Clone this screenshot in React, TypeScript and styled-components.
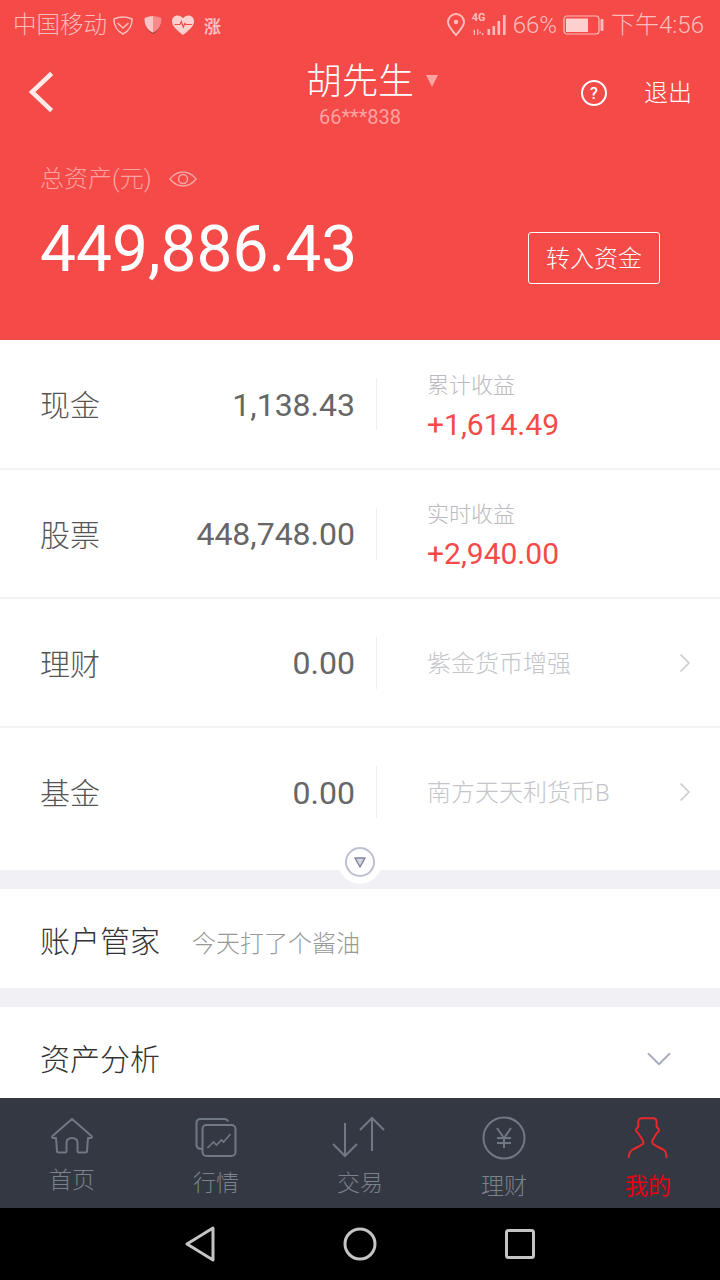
import React, { FC, ReactNode } from "react";
import styled, { createGlobalStyle } from "styled-components";
import { ChevronRight, ChevronDown } from "lucide-react";

const RED = "#f44a48";

const GlobalStyle = createGlobalStyle`
  html, body {
    margin: 0;
    padding: 0;
    background: #fff;
  }
  body {
    font-family: Roboto, "Noto Sans CJK SC", sans-serif;
  }
  * {
    box-sizing: border-box;
  }
`;

interface IAssetRow {
  label: string;
  amount: string;
  note: string;
  profit?: string;
}

const ASSET_ROWS: IAssetRow[] = [
  { label: "现金", amount: "1,138.43", note: "累计收益", profit: "+1,614.49" },
  { label: "股票", amount: "448,748.00", note: "实时收益", profit: "+2,940.00" },
  { label: "理财", amount: "0.00", note: "紫金货币增强" },
  { label: "基金", amount: "0.00", note: "南方天天利货币B" }
];

const StatusIcons: FC = () => (
  <>
    <StatusGlyph $gap={6}>
      <svg width="20" height="19" viewBox="0 0 20 19" fill="none" stroke="#fbbcbc" strokeWidth="1.6">
        <path d="M10 1c3.500 0 6.500.8 9 2 .3 6-3 12-9 15C4 15 .7 9 1 3c2.500-1.200 5.500-2 9-2z" />
        <path d="M4.500 7 10 12l5.500-5" />
      </svg>
    </StatusGlyph>
    <StatusGlyph $gap={11}>
      <svg width="18" height="20" viewBox="0 0 18 20">
        <path d="M9 1c3 0 6 .8 8.500 2 .3 7-2.500 13-8.500 16C3 16 .2 10 .5 3 3 1.800 6 1 9 1z" fill="#a83a3a" />
        <path d="M9 1C6 1 3 1.800.5 3 .2 9.500 2.800 15 9 17.800V1z" fill="#fbc4c4" />
        <path d="M9 1c3 0 6 .8 8.500 2 .2 6.500-2.300 12-8.500 14.800V1z" fill="#f98a8a" />
      </svg>
    </StatusGlyph>
    <StatusGlyph $gap={10}>
      <svg width="22" height="20" viewBox="0 0 22 20">
        <path
          d="M11 20C5.500 15.500 0 11.500 0 6.200 0 2.800 2.400.4 5.500.4c2.300 0 4.200 1.100 5.500 2.900C12.300 1.500 14.200.4 16.500.4 19.600.4 22 2.800 22 6.200 22 11.500 16.500 15.500 11 20z"
          fill="#fdd0d0"
        />
        <path d="M2.500 9.500h5.500l1.300-3 2 5.500 1.500-3.500 1 1h6" fill="none" stroke={RED} strokeWidth="1.200" />
      </svg>
    </StatusGlyph>
    <RiseMark>涨</RiseMark>
  </>
);

const Signal: FC = () => (
  <SignalBox>
    <NetworkMark>4G</NetworkMark>
    <svg width="36" height="22" viewBox="0 0 36 22" fill="#fbbcbc">
      <path d="M1 17l2-1.500V21H1.800v-3.200zM5 15h1.300v6H5zM7.500 17.500h1.300v2H7.500zM10 19h1.300v2H10z" />
      <rect x="15.500" y="15" width="2.600" height="6" />
      <rect x="20.500" y="12" width="2.600" height="9" />
      <rect x="25.500" y="7" width="2.600" height="14" />
      <rect x="31" y="1" width="2.600" height="20" />
    </svg>
  </SignalBox>
);

const StatusBar: FC = () => (
  <StatusRow>
    <StatusGroup>
      <CarrierText>中国移动</CarrierText>
      <StatusIcons />
    </StatusGroup>
    <StatusGroup>
      <svg width="20" height="24" viewBox="0 0 20 24" fill="none" stroke="#fbbcbc" strokeWidth="2">
        <path d="M10 22c-4-5-8-8.500-8-13a8 8 0 0 1 16 0c0 4.500-4 8-8 13z" />
        <circle cx="10" cy="9" r="2.200" fill="#fbbcbc" stroke="none" />
      </svg>
      <Signal />
      <StatusText>66%</StatusText>
      <BatterySlot>
        <svg width="41" height="20" viewBox="0 0 41 20">
          <rect x="1" y="1" width="35" height="18" rx="3" fill="none" stroke="#fbbcbc" strokeWidth="1.200" />
          <rect x="3" y="3.500" width="22" height="13.500" fill="#fdd0d0" />
          <rect x="37.500" y="4" width="3" height="12" rx="1" fill="#fbbcbc" />
        </svg>
      </BatterySlot>
      <ClockText>下午4:56</ClockText>
    </StatusGroup>
  </StatusRow>
);

const NavBar: FC = () => (
  <TitleBar>
    <BackButton>
      <svg width="28" height="42" viewBox="0 0 28 42" fill="none" stroke="#ffe9e9" strokeWidth="4.500" strokeLinecap="square">
        <path d="M22 4 4 21l18 17" strokeLinejoin="miter" />
      </svg>
    </BackButton>
    <TitleBlock>
      <TitleName>
        胡先生
        <TitleCaret />
      </TitleName>
      <AccountNo>66***838</AccountNo>
    </TitleBlock>
    <TitleActions>
      <HelpIcon>?</HelpIcon>
      <Logout>退出</Logout>
    </TitleActions>
  </TitleBar>
);

const Summary: FC = () => (
  <SummaryBlock>
    <SummaryLabel>
      总资产(元)
      <svg width="28" height="18" viewBox="0 0 28 18" fill="none" stroke="#fda3a3" strokeWidth="1.500">
        <path d="M1 9c3.500-4.500 8-7 13-7s9.500 2.500 13 7c-3.500 4.500-8 7-13 7S4.500 13.500 1 9z" />
        <circle cx="14" cy="9" r="4.500" />
      </svg>
    </SummaryLabel>
    <SummaryLine>
      <TotalAmount>449,886.43</TotalAmount>
      <TransferButton>转入资金</TransferButton>
    </SummaryLine>
  </SummaryBlock>
);

const AssetList: FC = () => (
  <Assets>
    {ASSET_ROWS.map((row, i) => (
      <AssetItem key={row.label} $height={i === 0 ? 130 : i === ASSET_ROWS.length - 1 ? 142 : 129} $last={i === ASSET_ROWS.length - 1}>
        <AssetLabel>{row.label}</AssetLabel>
        <AssetAmount>{row.amount}</AssetAmount>
        <AssetSide>
          {row.profit ? (
            <SideStack>
              <SideNote>{row.note}</SideNote>
              <SideProfit>{row.profit}</SideProfit>
            </SideStack>
          ) : (
            <SideLink>
              <SideLinkText>{row.note}</SideLinkText>
              <ChevronRight size={32} color="#c9cbd2" strokeWidth={1.3} />
            </SideLink>
          )}
        </AssetSide>
      </AssetItem>
    ))}
    <ExpandTab>
      <ExpandRing>
        <svg width="14" height="14" viewBox="0 0 14 14">
          <path d="M2 3h10L7 12z" fill="#d6d8e0" stroke="#7f84a0" strokeWidth="1.500" strokeLinejoin="round" />
        </svg>
      </ExpandRing>
    </ExpandTab>
  </Assets>
);

interface ITabProps {
  label: string;
  drop: number;
  active?: boolean;
  children: ReactNode;
}

const Tab: FC<ITabProps> = ({ label, drop, active, children }) => (
  <TabItem>
    <TabIcon>{children}</TabIcon>
    <TabLabel $drop={drop} $active={active}>
      {label}
    </TabLabel>
  </TabItem>
);

const BottomTabs: FC = () => (
  <TabBar>
    <Tab label="首页" drop={0}>
      <svg width="44" height="40" viewBox="0 0 44 40" fill="none" stroke="#6f7883" strokeWidth="2" strokeLinejoin="round">
        <path d="M22 3 2.500 20c-.8 1-.3 2 .8 2H6l1 13c0 1 1 1.500 2 1.500h6c1 0 1.500-.7 1.500-1.500v-8c0-3 2-5 5.500-5s5.500 2 5.500 5v8c0 .8.500 1.500 1.500 1.500h6c1 0 2-.5 2-1.500l1-13h2.700c1.100 0 1.600-1 .8-2z" />
      </svg>
    </Tab>
    <Tab label="行情" drop={3}>
      <svg width="44" height="42" viewBox="0 0 44 42" fill="none" stroke="#6f7883" strokeWidth="2">
        <path d="M8 33c-4 0-5.500-2-5.500-4V7c0-3 1.500-4 4-4h24c2 0 3 1 3.500 2.500" />
        <rect x="8.500" y="9" width="33" height="31" rx="4" />
        <path d="m13.500 32 6-6 3 3 5-5 2 2 7-8" strokeWidth="1.600" />
      </svg>
    </Tab>
    <Tab label="交易" drop={3}>
      <svg width="56" height="42" viewBox="0 0 56 42" fill="none" stroke="#6f7883" strokeWidth="2">
        <path d="M13 7v33M1 28l12 12 12-12" />
        <path d="M40 35V2M28 14 40 2l12 12" />
      </svg>
    </Tab>
    <Tab label="理财" drop={6}>
      <svg width="44" height="44" viewBox="0 0 44 44" fill="none" stroke="#6f7883" strokeWidth="2">
        <circle cx="22" cy="22" r="20.500" />
        <path d="m15 12 7 10 7-10M15 22h14M15 27h14M22 22v10" />
      </svg>
    </Tab>
    <Tab label="我的" drop={6} active>
      <svg width="40" height="44" viewBox="0 -1 40 44" fill="none" stroke="#e8282a" strokeWidth="2">
        <path d="M.5 41C1 37 2 34.500 4 33 8 30.500 13 29 15.300 26.300 15.500 25 15 24 14.600 23L10.300 16.300C9.500 15.500 8 15 8 13 8 11.500 9.500 11 10.300 9.600V5C10.300 3 11.500 1.300 13.600 1.300H25.300C27.500 1.300 28.600 3 28.600 5V9.600C29.500 11 31 11.500 31 13 31 15 29.500 15.500 28.600 16.300L24.600 23C24.200 24 23.900 25 24.600 26.300 27 29 32 30.500 36 33 38 34.500 38.500 37 38.600 41" />
      </svg>
    </Tab>
  </TabBar>
);

const SystemNav: FC = () => (
  <SystemBar>
    <svg width="30" height="36" viewBox="0 0 30 36" fill="none" stroke="#c4c4c4" strokeWidth="3" strokeLinejoin="round">
      <path d="M28 2v32L2 18z" />
    </svg>
    <svg width="34" height="34" viewBox="0 0 34 34" fill="none" stroke="#c4c4c4" strokeWidth="3">
      <circle cx="17" cy="17" r="15" />
    </svg>
    <svg width="30" height="30" viewBox="0 0 30 30" fill="none" stroke="#c4c4c4" strokeWidth="3" strokeLinejoin="round">
      <rect x="1.500" y="1.500" width="27" height="27" rx="2" />
    </svg>
  </SystemBar>
);

const App: FC = () => (
  <Root>
    <GlobalStyle />
    <RedHeader>
      <StatusBar />
      <NavBar />
      <Summary />
    </RedHeader>
    <Content>
      <AssetList />
      <Divider />
      <ButlerCard>
        <CardTitle>账户管家</CardTitle>
        <ButlerNote>今天打了个酱油</ButlerNote>
      </ButlerCard>
      <Divider />
      <AnalysisCard>
        <CardTitle>资产分析</CardTitle>
        <AnalysisChevron size={42} color="#a9adc0" strokeWidth={1.1} />
      </AnalysisCard>
    </Content>
    <BottomTabs />
    <SystemNav />
  </Root>
);

export default App;

const Root = styled.div`
  display: flex;
  flex-direction: column;
  width: 720px;
  height: 1280px;
  overflow: hidden;
  background: #fff;
`;

const RedHeader = styled.header`
  display: flex;
  flex-direction: column;
  height: 340px;
  background: ${RED};
  flex: none;
`;

const StatusRow = styled.div`
  display: flex;
  align-items: center;
  justify-content: space-between;
  height: 50px;
  padding: 0 16px 0 13px;
`;

const StatusGroup = styled.div`
  display: flex;
  align-items: center;
`;

const StatusGlyph = styled.span<{ $gap: number }>`
  display: flex;
  margin-left: ${({ $gap }) => $gap}px;
`;

const StatusText = styled.span`
  font-size: 24px;
  line-height: 50px;
  color: #fbbcbc;
  font-weight: 300;
`;

const CarrierText = styled(StatusText)`
  font-size: 23.5px;
`;

const ClockText = styled(StatusText)`
  margin-left: 7px;
`;

const SignalBox = styled.span`
  position: relative;
  display: flex;
  margin: 0 5px 0 6px;
`;

const NetworkMark = styled.span`
  position: absolute;
  left: 0;
  top: -2px;
  font-size: 11px;
  line-height: 12px;
  font-weight: 700;
  color: #fbbcbc;
`;

const BatterySlot = styled.span`
  display: flex;
  margin-left: 6px;
`;

const RiseMark = styled.span`
  margin-left: 10px;
  font-size: 17px;
  font-weight: 700;
  color: #fbbcbc;
`;

const TitleBar = styled.div`
  display: grid;
  grid-template-columns: 1fr auto 1fr;
  align-items: start;
  height: 88px;
  padding: 0 28px;
`;

const BackButton = styled.div`
  display: flex;
  padding-top: 21px;
`;

const TitleBlock = styled.div`
  display: flex;
  flex-direction: column;
  align-items: center;
  padding-top: 10px;
`;

const TitleName = styled.div`
  position: relative;
  font-size: 36px;
  line-height: 44px;
  color: #fff;
  font-weight: 300;
`;

const TitleCaret = styled.span`
  position: absolute;
  left: 120px;
  top: 15px;
  border-left: 6px solid transparent;
  border-right: 6px solid transparent;
  border-top: 12px solid #fda3a3;
`;

const AccountNo = styled.div`
  margin-top: 1px;
  font-size: 20px;
  line-height: 24px;
  color: #fda3a3;
`;

const TitleActions = styled.div`
  display: flex;
  align-items: center;
  justify-content: flex-end;
  gap: 37px;
  padding-top: 27px;
`;

const HelpIcon = styled.span`
  display: flex;
  align-items: center;
  justify-content: center;
  width: 26px;
  height: 26px;
  border: 2px solid #fff;
  border-radius: 50%;
  font-size: 16px;
  font-weight: 500;
  color: #fff;
`;

const Logout = styled.span`
  font-size: 24px;
  line-height: 32px;
  font-weight: 300;
  color: #fff;
`;

const SummaryBlock = styled.div`
  display: flex;
  flex-direction: column;
  padding: 23px 60px 0 40px;
`;

const SummaryLabel = styled.div`
  display: flex;
  align-items: center;
  gap: 17px;
  font-size: 24px;
  line-height: 36px;
  font-weight: 300;
  color: #fda3a3;
`;

const SummaryLine = styled.div`
  display: flex;
  align-items: center;
  justify-content: space-between;
  margin-top: 15px;
`;

const TotalAmount = styled.div`
  font-size: 64px;
  line-height: 76px;
  color: #fff;
`;

const TransferButton = styled.button`
  width: 132px;
  height: 52px;
  margin-top: 16px;
  padding: 0 0 3px;
  border: 1px solid #fff;
  border-radius: 3px;
  background: transparent;
  font-family: inherit;
  font-size: 24px;
  font-weight: 300;
  color: #fff;
`;

const Content = styled.main`
  display: flex;
  flex-direction: column;
  flex: 1;
  min-height: 0;
`;

const Assets = styled.section`
  position: relative;
  display: flex;
  flex-direction: column;
  flex: none;
`;

const AssetItem = styled.div<{ $height: number; $last: boolean }>`
  display: flex;
  align-items: center;
  height: ${({ $height }) => $height}px;
  padding: ${({ $last }) => ($last ? "0 0 14px 40px" : "0 0 0 40px")};
  border-bottom: ${({ $last }) => ($last ? "none" : "2px solid #f3f3f6")};
`;

const AssetLabel = styled.div`
  width: 80px;
  padding-bottom: 2px;
  font-size: 30px;
  font-weight: 300;
  color: #555;
`;

const AssetAmount = styled.div`
  width: 235px;
  padding-top: 1px;
  text-align: right;
  font-size: 32px;
  color: #666;
`;

const AssetSide = styled.div`
  display: flex;
  flex-direction: column;
  justify-content: center;
  flex: 1;
  height: 52px;
  margin-left: 21px;
  padding-left: 50px;
  border-left: 1px solid #efeff2;
`;

const SideStack = styled.div`
  display: flex;
  flex-direction: column;
  gap: 4px;
  padding-top: 7px;
`;

const SideNote = styled.div`
  font-size: 22px;
  line-height: 30px;
  font-weight: 300;
  color: #b9bbc0;
`;

const SideProfit = styled.div`
  font-size: 30px;
  line-height: 40px;
  color: ${RED};
`;

const SideLink = styled.div`
  display: flex;
  align-items: center;
  justify-content: space-between;
  padding-right: 19px;
`;

const SideLinkText = styled.span`
  padding-bottom: 3px;
  font-size: 24px;
  font-weight: 300;
  color: #c3c5ca;
`;

const ExpandTab = styled.div`
  position: absolute;
  left: 338px;
  bottom: -14px;
  display: flex;
  align-items: center;
  justify-content: center;
  width: 44px;
  height: 44px;
  border-radius: 50%;
  background: #fff;
`;

const ExpandRing = styled.div`
  display: flex;
  align-items: center;
  justify-content: center;
  width: 30px;
  height: 30px;
  border: 2px solid #bcc0d0;
  border-radius: 50%;
`;

const Divider = styled.div`
  flex: none;
  height: 19px;
  background: #f0f0f5;
`;

const ButlerCard = styled.section`
  display: flex;
  align-items: center;
  flex: none;
  height: 99px;
  padding: 0 40px;
`;

const CardTitle = styled.div`
  font-size: 30px;
  font-weight: 300;
  color: #333;
`;

const ButlerNote = styled.div`
  margin-left: 32px;
  padding-top: 6px;
  font-size: 24px;
  font-weight: 300;
  color: #999;
`;

const AnalysisCard = styled.section`
  display: flex;
  align-items: center;
  justify-content: space-between;
  flex: 1;
  padding: 22px 40px 14px 40px;
`;

const AnalysisChevron = styled(ChevronDown)`
  margin-top: 4px;
`;

const TabBar = styled.nav`
  display: grid;
  grid-template-columns: repeat(5, 144px);
  flex: none;
  height: 110px;
  background: #343843;
`;

const TabItem = styled.div`
  display: flex;
  flex-direction: column;
  align-items: center;
`;

const TabIcon = styled.div`
  display: flex;
  align-items: flex-start;
  height: 50px;
  padding-top: 18px;
`;

const TabLabel = styled.span<{ $drop: number; $active?: boolean }>`
  margin-top: ${({ $drop }) => $drop + 18}px;
  font-size: 23px;
  line-height: 30px;
  font-weight: ${({ $active }) => ($active ? 400 : 300)};
  color: ${({ $active }) => ($active ? "#e60012" : "#7a828c")};
`;

const SystemBar = styled.div`
  display: flex;
  align-items: center;
  justify-content: center;
  gap: 128px;
  flex: none;
  height: 72px;
  background: #000;
`;
